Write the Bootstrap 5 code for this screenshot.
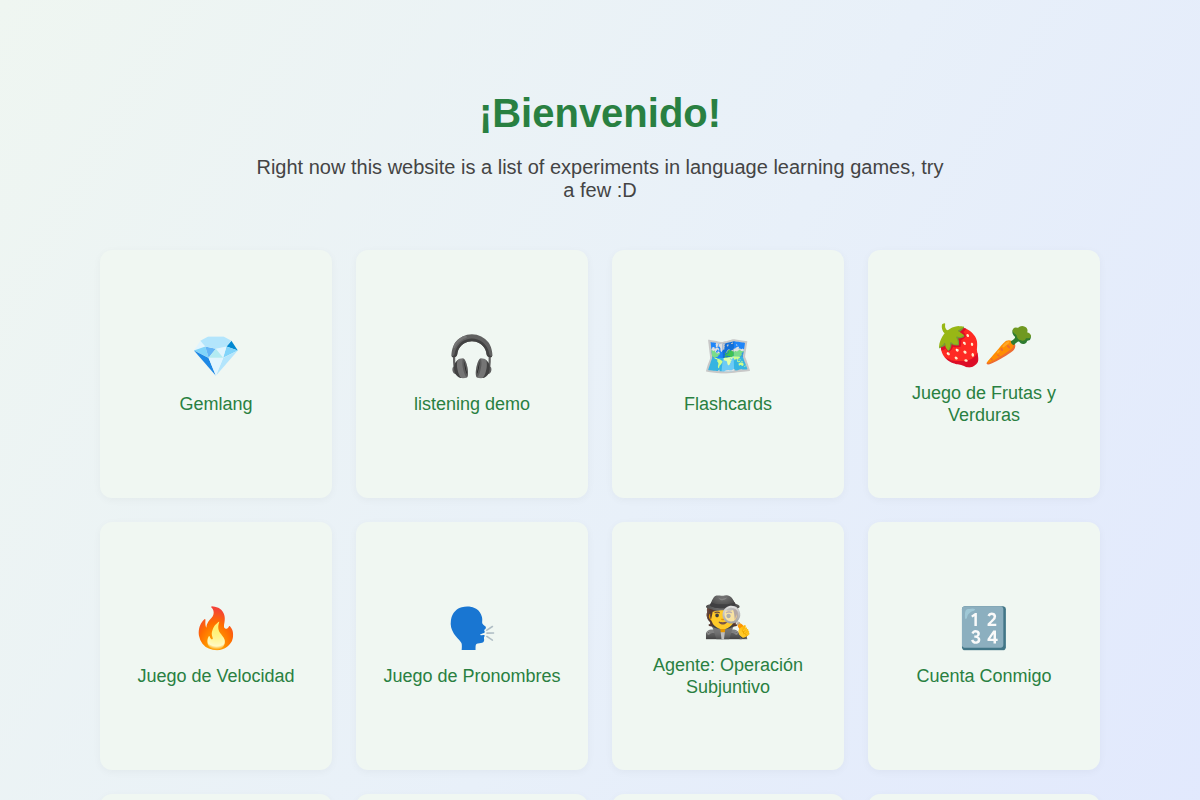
<!DOCTYPE html>
<html lang="es">
<head>
<meta charset="utf-8">
<meta name="viewport" content="width=device-width, initial-scale=1">
<title>¡Bienvenido!</title>
<link href="https://cdn.jsdelivr.net/npm/bootstrap@5.3.0/dist/css/bootstrap.min.css" rel="stylesheet">
<style>
body {
  font-family: "Liberation Sans", Arial, sans-serif;
  background: linear-gradient(120deg, #eff6f1, #e8f0f9 50%, #e0e7fe);
  min-height: 100vh;
}
.page { max-width: 1000px; padding: 89px 0 80px; }
h1 { font-size: 40px; line-height: 48px; color: #298041; margin-bottom: 19px; }
.intro { font-size: 20px; line-height: 23px; color: #444; max-width: 700px; margin-bottom: 48px; }
.games { gap: 24px; display: grid; grid-template-columns: repeat(4, 1fr); }
.game {
  min-height: 248px;
  border-radius: 12px;
  background: #f0f7f2;
  color: #298041;
  font-size: 18px;
  line-height: 22px;
  box-shadow: 0 2px 8px rgba(0, 0, 0, .04);
}
.pic { font-size: 40px; line-height: 46px; margin-bottom: 14px; }
@media (max-width: 767px) { .games { grid-template-columns: repeat(2, 1fr); } }
</style>
</head>
<body>
<main class="page mx-auto text-center">
  <h1 class="fw-bold">¡Bienvenido!</h1>
  <p class="intro mx-auto">Right now this website is a list of experiments in language learning games, try a few :D</p>
  <nav class="games">
    <a class="game d-flex flex-column align-items-center justify-content-center text-decoration-none p-4" href="#"><span class="pic">💎</span>Gemlang</a>
    <a class="game d-flex flex-column align-items-center justify-content-center text-decoration-none p-4" href="#"><span class="pic">🎧</span>listening demo</a>
    <a class="game d-flex flex-column align-items-center justify-content-center text-decoration-none p-4" href="#"><span class="pic">🗺️</span>Flashcards</a>
    <a class="game d-flex flex-column align-items-center justify-content-center text-decoration-none p-4" href="#"><span class="pic">🍓🥕</span>Juego de Frutas y Verduras</a>
    <a class="game d-flex flex-column align-items-center justify-content-center text-decoration-none p-4" href="#"><span class="pic">🔥</span>Juego de Velocidad</a>
    <a class="game d-flex flex-column align-items-center justify-content-center text-decoration-none p-4" href="#"><span class="pic">🗣️</span>Juego de Pronombres</a>
    <a class="game d-flex flex-column align-items-center justify-content-center text-decoration-none p-4" href="#"><span class="pic">🕵️</span>Agente: Operación Subjuntivo</a>
    <a class="game d-flex flex-column align-items-center justify-content-center text-decoration-none p-4" href="#"><span class="pic">🔢</span>Cuenta Conmigo</a>
    <div class="game"></div>
    <div class="game"></div>
    <div class="game"></div>
    <div class="game"></div>
  </nav>
</main>
<script src="https://cdn.jsdelivr.net/npm/bootstrap@5.3.0/dist/js/bootstrap.bundle.min.js"></script>
</body>
</html>
